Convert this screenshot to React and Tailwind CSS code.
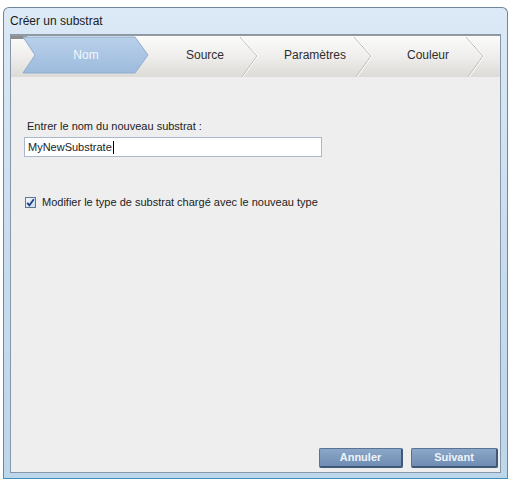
const TABS = [
  { label: "Nom", w: "w-[150px]", active: true },
  { label: "Source", w: "w-[88px]" },
  { label: "Paramètres", w: "w-[132px]" },
  { label: "Couleur", w: "w-[94px]" },
];

const CHEVRONS = [229, 343, 455];

function TabBar() {
  return (
    <div className="relative h-[42px] border-t border-[#9a9a9a] bg-gradient-to-b from-[#fbfbfa] via-[#efeeec] to-[#dddbd7]">
      <svg className="absolute inset-0" width="489" height="42" viewBox="0 0 489 42">
        <defs>
          <linearGradient id="act" x1="0" y1="0" x2="0" y2="1">
            <stop offset="0" stopColor="#b9d0ea" />
            <stop offset="1" stopColor="#9dbbdd" />
          </linearGradient>
        </defs>
        <rect x="0" y="0" width="16" height="3" fill="#8c8c8c" />
        <path d="M12 1 L124 1 L137 19 L124 37 L12 37 L24 19 Z" fill="url(#act)" stroke="#8fadd0" strokeWidth="1" />
        {CHEVRONS.map((x) => (
          <g key={x} fill="none" strokeWidth="1">
            <polyline points={`${x},1 ${x + 17},20 ${x + 2},41`} stroke="#b9b7b3" />
            <polyline points={`${x + 1},1 ${x + 18},20 ${x + 3},41`} stroke="#ffffff" />
          </g>
        ))}
      </svg>
      <div className="relative flex h-[37px] items-center">
        {TABS.map((t) => (
          <div
            key={t.label}
            className={`${t.w} text-center text-[12px] ${t.active ? "text-[#f3f7fc]" : "text-[#2e2e2e]"}`}
          >
            {t.label}
          </div>
        ))}
      </div>
    </div>
  );
}

function Btn({ children, w }) {
  return (
    <button
      type="button"
      className={`${w} h-[20px] rounded-[2px] border border-[#5a7294] border-b-2 border-r-2 border-b-[#3f5878] border-r-[#3f5878] bg-gradient-to-b from-[#8ba7c8] to-[#6f8db3] text-[11px] font-bold text-[#eef3f9]`}
    >
      {children}
    </button>
  );
}

export default function App() {
  return (
    <div
      className="w-[512px] h-[482px] bg-white pt-[7px] pl-[3px]"
      style={{ fontFamily: '"Liberation Sans", Arial, sans-serif' }}
    >
      <div className="w-[505px] h-[472px] flex flex-col rounded-t-[6px] border border-[#71869e] border-b-[#3f8fb8] bg-gradient-to-b from-[#dce9f6] via-[#c9dcef] to-[#bcd6ea]">
        <div className="h-[26px] flex items-center pl-[6px] text-[12px] text-[#1b1b1b]">Créer un substrat</div>
        <div className="mx-[6px] mb-[5px] flex-1 flex flex-col border border-[#8796a8] bg-[#eeeeee]">
          <TabBar />
          <div className="pl-[13px] pt-[42px]">
            <div className="pl-[3px] text-[11px] leading-[14px] text-[#222]">Entrer le nom du nouveau substrat :</div>
            <div className="mt-[4px] w-[298px] h-[20px] border border-[#a9b9cb] bg-white pl-[3px] flex items-center text-[11px] text-[#222]">
              MyNewSubstrate
              <span className="ml-px h-[13px] w-px bg-black" />
            </div>
            <div className="mt-[37px] flex items-center">
              <div className="ml-px w-[11px] h-[11px] border border-[#5b7799] bg-gradient-to-br from-[#f4f8fc] to-[#c9d8e8] flex items-center justify-center">
                <svg width="9" height="9" viewBox="0 0 9 9">
                  <path d="M1.2 4.8 L3.4 7.3 L7.8 1.3" fill="none" stroke="#1d3f87" strokeWidth="1.8" />
                </svg>
              </div>
              <span className="ml-[6px] text-[11px] text-[#222]">Modifier le type de substrat chargé avec le nouveau type</span>
            </div>
          </div>
          <div className="mt-auto flex justify-end gap-[8px] pr-[2px] pb-[4px]">
            <Btn w="w-[84px]">Annuler</Btn>
            <Btn w="w-[87px]">Suivant</Btn>
          </div>
        </div>
      </div>
    </div>
  );
}
